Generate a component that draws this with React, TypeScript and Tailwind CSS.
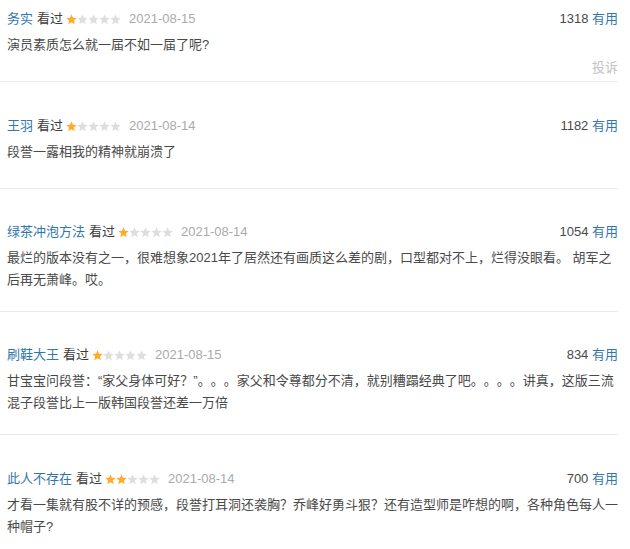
const font = { fontFamily: '"Liberation Sans", Arial, "Noto Sans CJK SC", sans-serif' };

interface Review {
    user: string;
    stars: number;
    date: string;
    votes: number;
    lines: string[];
    pt: string;
    pb: string;
    report?: boolean;
}

const reviews: Review[] = [
    {
        user: "务实",
        stars: 1,
        date: "2021-08-15",
        votes: 1318,
        lines: ["演员素质怎么就一届不如一届了呢?"],
        pt: "pt-[10px]",
        pb: "pb-[4px]",
        report: true,
    },
    {
        user: "王羽",
        stars: 1,
        date: "2021-08-14",
        votes: 1182,
        lines: ["段誉一露相我的精神就崩溃了"],
        pt: "pt-[35px]",
        pb: "pb-[25px]",
    },
    {
        user: "绿茶冲泡方法",
        stars: 1,
        date: "2021-08-14",
        votes: 1054,
        lines: [
            "最烂的版本没有之一，很难想象2021年了居然还有画质这么差的剧，口型都对不上，烂得没眼看。 胡军之",
            "后再无萧峰。哎。",
        ],
        pt: "pt-[34px]",
        pb: "pb-[20px]",
    },
    {
        user: "刷鞋大王",
        stars: 1,
        date: "2021-08-15",
        votes: 834,
        lines: [
            "甘宝宝问段誉：“家父身体可好？”。。。家父和令尊都分不清，就别糟蹋经典了吧。。。。讲真，这版三流",
            "混子段誉比上一版韩国段誉还差一万倍",
        ],
        pt: "pt-[34px]",
        pb: "pb-[20px]",
    },
    {
        user: "此人不存在",
        stars: 2,
        date: "2021-08-14",
        votes: 700,
        lines: [
            "才看一集就有股不详的预感，段誉打耳洞还袭胸？乔峰好勇斗狠？还有造型师是咋想的啊，各种角色每人一",
            "种帽子?",
        ],
        pt: "pt-[35px]",
        pb: "pb-[20px]",
    },
];

const Star = ({ on }: { on: boolean }) => (
    <svg width="11" height="11" viewBox="0 0 11 11">
        <polygon
            points="5.5,0.2 6.97,3.68 10.73,4 7.88,6.47 8.73,10.15 5.5,8.2 2.27,10.15 3.12,6.47 0.27,4 4.03,3.68"
            fill={on ? "#ffac2d" : "#dedede"}
        />
    </svg>
);

const ReviewItem = ({ review, last }: { review: Review; last: boolean }) => (
    <div className={`${review.pt} ${review.pb} ${last ? "" : "border-b border-[#eaeaea]"}`}>
        <div className="flex items-center h-[18px] pl-[7px] text-[13px] leading-[18px]">
            <span className="text-[#37a]">{review.user}</span>
            <span className="ml-[4px] text-[#3d3d3d]">看过</span>
            <span className="ml-[3px] flex">
                {[0, 1, 2, 3, 4].map((i) => (
                    <Star key={i} on={i < review.stars} />
                ))}
            </span>
            <span className="ml-[8px] text-[#aaa]">{review.date}</span>
            <span className="ml-auto text-[#494949]">
                {review.votes} <span className="text-[#37a]">有用</span>
            </span>
        </div>
        <div className="mt-[6px] pl-[7px] text-[13px] leading-[22px] text-[#494949] [text-spacing-trim:space-all]">
            {review.lines.map((line, i) => (
                <div key={i} className="whitespace-nowrap">{line}</div>
            ))}
        </div>
        {review.report && (
            <div className="mt-[3px] text-right text-[13px] leading-[18px] text-[#c3c3c3]">投诉</div>
        )}
    </div>
);

export default function App() {
    return (
        <div className="w-[630px] h-[549px] bg-white overflow-hidden" style={font}>
            <div className="mr-[12px]">
                {reviews.map((r, i) => (
                    <ReviewItem key={i} review={r} last={i === reviews.length - 1} />
                ))}
            </div>
        </div>
    );
}
